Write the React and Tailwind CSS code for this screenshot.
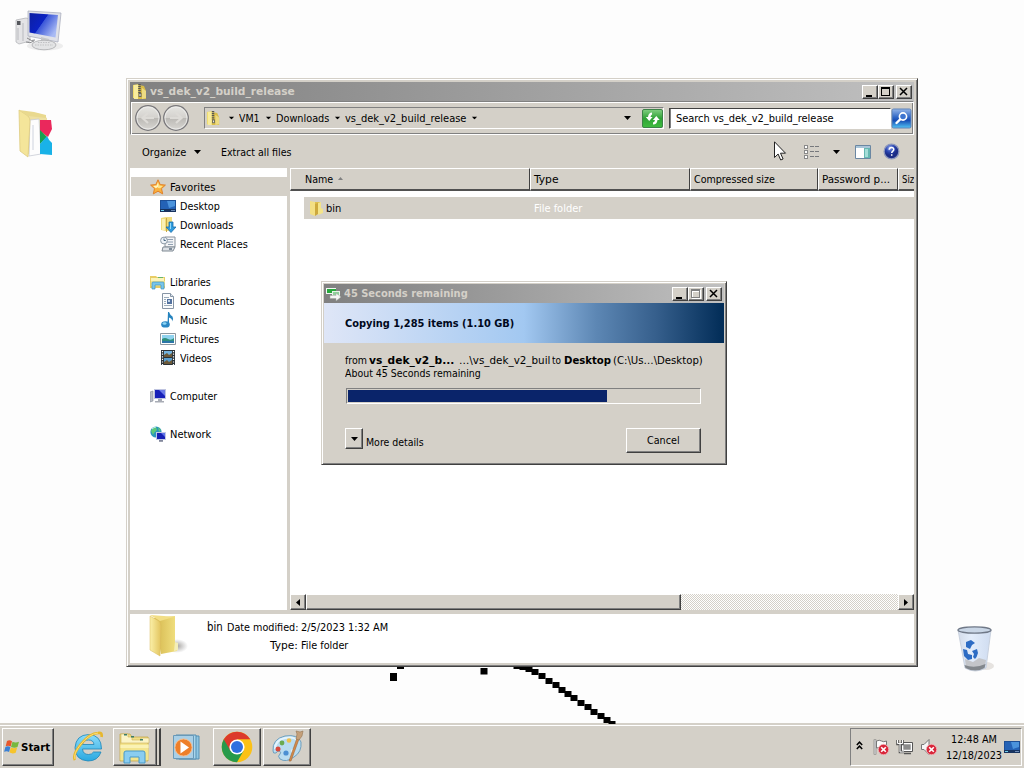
import React, { useLayoutEffect, useRef, useState } from "react";

/* UI label squeezed to a fixed advance width, like the narrow system font */
function T({ w, children, className = "" }) {
  const ref = useRef(null);
  const [k, setK] = useState(1);
  useLayoutEffect(() => {
    if (ref.current) setK(w / ref.current.offsetWidth);
  }, [w, children]);
  return (
    <span className={"block shrink-0 h-[13px] " + className} style={{ width: w }}>
      <span ref={ref} className="inline-block origin-left whitespace-pre leading-[13px]" style={{ transform: `scaleX(${k})` }}>
        {children}
      </span>
    </span>
  );
}

const raised = "bg-[#d4d0c8] border border-t-white border-l-white border-r-[#404040] border-b-[#404040] shadow-[inset_-1px_-1px_0_#808080]";
const frame = "bg-[#d4d0c8] border border-t-[#d4d0c8] border-l-[#d4d0c8] border-r-[#404040] border-b-[#404040] shadow-[inset_1px_1px_0_#fff,inset_-1px_-1px_0_#808080]";

function Down({ className = "" }) {
  return (
    <svg className={"block shrink-0 " + className} width="7" height="4" viewBox="0 0 7 4">
      <path d="M0 0h7L3.5 4z" fill="#000" />
    </svg>
  );
}

function CaptionButton({ kind, className = "" }) {
  return (
    <div className={"w-4 h-[14px] shrink-0 " + raised + " " + className}>
      <svg className="block" width="14" height="12" viewBox="0 0 14 12" shapeRendering="crispEdges">
        {kind === "min" && <path d="M3 9h6v2H3z" fill="#000" />}
        {kind === "max" && <path d="M2 1h9v9H2zM3 3v6h7V3z" fillRule="evenodd" fill="#000" />}
        {kind === "maxoff" && (
          <g>
            <path d="M3 2h9v9H3zM4 4v6h7V4z" fillRule="evenodd" fill="#fff" />
            <path d="M2 1h9v9H2zM3 3v6h7V3z" fillRule="evenodd" fill="#808080" />
          </g>
        )}
        {kind === "close" && <path d="M3 2l7 7M10 2l-7 7" stroke="#000" strokeWidth="1.5" shapeRendering="auto" />}
      </svg>
    </div>
  );
}

function ZipFolder({ s = 16 }) {
  return (
    <svg className="block shrink-0" width={s} height={s} viewBox="0 0 16 16">
      <path d="M1 1l6-1v15l-6-1z" fill="#f0dc6c" />
      <path d="M7 1l5 1 2 5v8H6z" fill="#d9bd49" />
      <path d="M2 1h4v14H2z" fill="#f8ec9c" />
      <path d="M10 4l4 3v7l-4 1z" fill="#eddb82" />
      <path d="M7.5 0v9" stroke="#555" strokeWidth="2.6" strokeDasharray="1.2 0.8" />
      <path d="M6.5 9h3v4h-3z" fill="#6c6a5c" />
      <path d="M7.5 10h1v2h-1z" fill="#eee" />
    </svg>
  );
}

function Folder({ s = 16 }) {
  return (
    <svg className="block shrink-0" width={s} height={s} viewBox="0 0 16 16">
      <path d="M2 1l5 1v14l-5-2z" fill="#f3df83" />
      <path d="M7 2h5v12H7z" fill="#dfc04e" />
      <path d="M7 4l3-1v11l-3 2z" fill="#cda93d" />
      <path d="M10 3l3-1v6l2 1v4l-5 2z" fill="#f4e48a" />
    </svg>
  );
}

function BigFolder() {
  return (
    <svg className="block shrink-0" width="42" height="44" viewBox="0 0 42 44">
      <defs>
        <linearGradient id="bf1" x1="0" x2="1"><stop stopColor="#fbf0a8" /><stop offset="1" stopColor="#e2c45e" /></linearGradient>
        <linearGradient id="bf2" x1="0" x2="1"><stop stopColor="#d4b64c" /><stop offset="1" stopColor="#f3e384" /></linearGradient>
        <radialGradient id="bf3"><stop stopColor="#8e8a86" stopOpacity=".8" /><stop offset="1" stopColor="#999" stopOpacity="0" /></radialGradient>
      </defs>
      <ellipse cx="29" cy="32" rx="11" ry="7" fill="url(#bf3)" />
      <path d="M6 4l21-2v27l3 2-1 6-16 3z" fill="url(#bf2)" />
      <path d="M27 28l3 1v7l-4 1z" fill="#f4eeb8" />
      <path d="M2 2l9 5q2 2 2 5l-1 30-10-6z" fill="url(#bf1)" stroke="#d8ba5c" strokeWidth=".5" />
      <path d="M2 1l14 1 10 1-14 4z" fill="#f2de86" />
    </svg>
  );
}

const icons = {
  star: (
    <g>
      <path d="M8 .8l2.2 4.8 5.2.5-3.9 3.5 1.2 5.3L8 12.2l-4.7 2.7 1.2-5.3L.6 6.1l5.2-.5z" fill="#fbb13c" stroke="#e0812a" strokeWidth="1" />
      <path d="M8 3l1.3 3.6 3.6.4-2.7 2.2L8 9z" fill="#fde58a" />
      <path d="M8 3L6.7 6.6 3.1 7l2.7 2.2L8 8z" fill="#fff3c0" />
    </g>
  ),
  desktop: (
    <g>
      <path d="M0 2h16v12H0z" fill="#1d4f96" />
      <path d="M1 3h14v8H1z" fill="#2462b6" />
      <path d="M7 3h8v5L9 10z" fill="#4b93dc" />
      <path d="M0 11h16v3H0z" fill="#17335f" />
      <path d="M1 12h3v1H1z" fill="#6fd0ee" />
      <path d="M11 12h4v1h-4z" fill="#6d8bb6" />
    </g>
  ),
  downloads: (
    <g>
      <path d="M1 1l5-1h6v14H6l-5-1z" fill="#f0dc7e" />
      <path d="M6 1h1v14H6z" fill="#c9a944" />
      <path d="M2 2h3v11H2z" fill="#faf0b4" />
      <path d="M9 5h4v5h3l-5 5.5L6 10h3z" fill="#2f9bdd" stroke="#1a6ca9" strokeWidth=".8" />
      <path d="M10 6h1v6h-1z" fill="#91d9fa" />
    </g>
  ),
  recent: (
    <g>
      <path d="M5 1h10v10H5z" fill="#f2f3f5" stroke="#8a939d" />
      <path d="M7 3.5h6M7 6h6M8 8.500h5" stroke="#8fa0b2" />
      <path d="M3 11h12l-2 4H2z" fill="#dde1e6" stroke="#7f8993" />
      <circle cx="4" cy="4.500" r="3.4" fill="#eef3f8" stroke="#8c99a5" />
      <path d="M4 2.500v2h1.800" stroke="#496882" fill="none" />
      <path d="M9 12h3v2H9z" fill="#7d8b99" />
    </g>
  ),
  libraries: (
    <g>
      <path d="M0 2h6l1 1h8v11H0z" fill="#e8cd66" />
      <path d="M1 4h13v3H1z" fill="#fbf3b9" />
      <path d="M1 7h14v5H1z" fill="#f5e58c" />
      <path d="M8 3h5v1H8z" fill="#67b56b" />
      <path d="M2 15V9q0-1 1-1h10q1 0 1 1v6h-3v-4H5v4z" fill="#79c5ea" stroke="#3e93c4" strokeWidth=".7" />
    </g>
  ),
  documents: (
    <g>
      <path d="M2.500.5h8l3 3v12h-11z" fill="#fbfcfd" stroke="#8795a5" />
      <path d="M10.500.5v3h3" fill="#dce5ee" stroke="#8795a5" />
      <path d="M4 4.500h5M4 6.500h2M4 8.500h2M4 10.500h2M4 12.500h8" stroke="#9cacba" />
      <path d="M7 6h5v5H7z" fill="#53729f" />
      <path d="M8 7h2v2H8z" fill="#c3d6ea" />
    </g>
  ),
  music: (
    <g>
      <path d="M8 0l1 0q1 3 3.500 4.500Q14 7 12 9.500q.5-3-3-4V12H7.500z" fill="#2583be" />
      <ellipse cx="5.500" cy="12.400" rx="4.300" ry="3.200" fill="#2b87c4" />
      <ellipse cx="4.500" cy="11.500" rx="2" ry="1.200" fill="#8ed6f5" />
    </g>
  ),
  pictures: (
    <g>
      <path d="M.5 2.500h15v11H.5z" fill="#fdfdfd" stroke="#8c979f" />
      <path d="M2 4h12v8H2z" fill="#8fd2ee" />
      <path d="M2 8q3-2 6 0t6-1v5H2z" fill="#2f8f7c" />
      <path d="M2 10h12v2H2z" fill="#2a75a8" />
    </g>
  ),
  videos: (
    <g>
      <path d="M1 0h14v15H1z" fill="#2c3338" />
      <path d="M4 1h8v6H4z" fill="#74b3de" />
      <path d="M4 8h8v6H4z" fill="#5a9fd0" />
      <path d="M4 5l3-2 2 2 3-2v4H4zM4 12l3-2 2 2 3-2v4H4z" fill="#6d5a39" />
      <path d="M2.500 1v14M13.500 1v14" stroke="#fff" strokeWidth="1.2" strokeDasharray="1.2 1.400" />
    </g>
  ),
  computer: (
    <g>
      <path d="M0 4l3-1v10l-3 1z" fill="#b9bec6" stroke="#858c98" strokeWidth=".6" />
      <path d="M4 1h12v10H4z" fill="#bfc4e0" />
      <path d="M5 2h10v8H5z" fill="#1720b8" />
      <path d="M9 2h6v6z" fill="#6b7be8" />
      <path d="M8 11h4v2H8zM5 13h9v1.500H5z" fill="#a8acb5" />
    </g>
  ),
  network: (
    <g>
      <circle cx="6" cy="6" r="5.600" fill="#2b95bd" />
      <path d="M1 5q2-4 5-4l1 3-3 3-1 2zM8 1l3 3-2 2z" fill="#5cc879" />
      <path d="M2 3q2-2 4-2" stroke="#c2f0f0" fill="none" />
      <path d="M6 6h10v8H6z" fill="#c2c8e6" />
      <path d="M7 7h8v6H7z" fill="#151fb4" />
      <path d="M11 7h4v4z" fill="#5d71e8" />
      <path d="M9 14h4v1.800H9z" fill="#82889c" />
    </g>
  ),
};

function Icon({ name, className = "" }) {
  return (
    <svg className={"block shrink-0 " + className} width="16" height="16" viewBox="0 0 16 16">{icons[name]}</svg>
  );
}

const tree = [
  ["star", "Favorites", 46, 0, true],
  ["desktop", "Desktop", 40, 1],
  ["downloads", "Downloads", 53, 1],
  ["recent", "Recent Places", 68, 1],
  null,
  ["libraries", "Libraries", 41, 0],
  ["documents", "Documents", 54, 1],
  ["music", "Music", 27, 1],
  ["pictures", "Pictures", 39, 1],
  ["videos", "Videos", 32, 1],
  null,
  ["computer", "Computer", 47, 0],
  null,
  ["network", "Network", 41, 0],
];

function NavButton({ flip }) {
  return (
    <svg className="block shrink-0" width="28" height="28" viewBox="0 0 28 28">
      <defs>
        <linearGradient id="nb" x1="0" y1="0" x2="0" y2="1">
          <stop stopColor="#e6e5e2" /><stop offset=".48" stopColor="#d4d2ce" /><stop offset=".52" stopColor="#bbb9b5" /><stop offset="1" stopColor="#dad8d4" />
        </linearGradient>
      </defs>
      <circle cx="14" cy="14" r="12.300" fill="url(#nb)" stroke="#77767a" strokeWidth="1.200" />
      <circle cx="14" cy="14" r="11" fill="none" stroke="#efefed" strokeWidth=".8" />
      <path d={flip ? "M8 14h11M14 9l5.500 5-5.500 5" : "M20 14H9M14 9l-5.500 5 5.500 5"} fill="none" stroke="#dddbd7" strokeWidth="2.200" />
    </svg>
  );
}

function AddressBar() {
  return (
    <div className="flex h-[34px] shrink-0 items-center w-[784px] border border-[#808080] border-b-white border-r-white shadow-[inset_1px_1px_0_#fff,inset_-1px_-1px_0_#808080]">
      <div className="flex w-[56px] ml-[3px]"><NavButton /><NavButton flip /></div>
      <div className="ml-[14px] flex h-[22px] w-[460px] items-center border border-[#808080] border-b-white border-r-white pl-px">
        <ZipFolder s={15} />
        <Down className="scale-80 ml-[7px] mr-1" />
        <T w={21}>VM1</T>
        <Down className="scale-80 ml-[5px] mr-[4px]" />
        <T w={53}>Downloads</T>
        <Down className="scale-80 ml-[5px] mr-[4px]" />
        <T w={121}>vs_dek_v2_build_release</T>
        <Down className="scale-80 ml-[5px]" />
        <Down className="ml-auto mr-[11px]" />
        <svg className="block shrink-0" width="21" height="19" viewBox="0 0 21 19">
          <defs><linearGradient id="gr" x1="0" y1="0" x2="0" y2="1"><stop stopColor="#82cf82" /><stop offset=".5" stopColor="#2fa236" /><stop offset="1" stopColor="#3fbd3f" /></linearGradient></defs>
          <rect x=".5" y=".5" width="20" height="18" rx="1.500" fill="url(#gr)" stroke="#3d8348" />
          <path d="M10 3.500q-3.500 0-4 4.500H3.800l3.400 4 3.400-4H8.500q.3-2 1.500-2.500zM11 15.500q4 0 4.500-4.500h2.200l-3.400-4-3.400 4h2.100q-.3 2-2 2.500z" fill="#fff" />
        </svg>
      </div>
      <div className="ml-[5px] flex h-[21px] w-[222px] items-center border border-[#404040] border-b-white border-r-white bg-white pl-[6px] shadow-[inset_1px_0_0_#808080]">
        <T w={158} className="mt-px">Search vs_dek_v2_build_release</T>
      </div>
      <svg className="block shrink-0" width="21" height="21" viewBox="0 0 21 21">
        <defs><linearGradient id="sb" x1="0" y1="0" x2="0" y2="1"><stop stopColor="#94b5e8" /><stop offset=".45" stopColor="#2c63c4" /><stop offset=".6" stopColor="#164cb4" /><stop offset="1" stopColor="#52c4f4" /></linearGradient></defs>
        <rect x="1" y="1" width="19" height="19" rx="1.500" fill="url(#sb)" stroke="#5f83b8" />
        <circle cx="12" cy="8.500" r="3.600" fill="#3d74d0" stroke="#fff" strokeWidth="1.600" />
        <path d="M9 11.500L5.500 15" stroke="#fff" strokeWidth="2.400" strokeLinecap="round" />
      </svg>
    </div>
  );
}

function Toolbar() {
  return (
    <div className="flex h-[33px] shrink-0 items-center pl-[12px] pr-[14px]">
      <T w={44} className="mt-[2px]">Organize</T>
      <Down className="ml-[8px]" />
      <T w={71} className="ml-[20px] mt-[2px]">Extract all files</T>
      <svg className="ml-auto block" width="16" height="14" viewBox="0 0 16 14" shapeRendering="crispEdges">
        {[0, 5, 10].map((y) => (
          <g key={y}>
            <path d={`M.5 ${y + 0.5}h3v3h-3z`} fill="#fff" stroke="#8a8a8a" />
            <path d={`M6 ${y + 1.5}h4M11 ${y + 1.5}h4`} stroke="#77797d" />
          </g>
        ))}
      </svg>
      <Down className="ml-[13px] mr-[15px]" />
      <svg className="block" width="16" height="14" viewBox="0 0 16 14">
        <path d="M.5.5h15v13H.5z" fill="#fff" stroke="#6b87a2" />
        <path d="M1 1h14v2H1z" fill="#a9c5d9" />
        <path d="M9 3h6v10H9z" fill="#66b7b2" /><path d="M10 4h3v8h-3z" fill="#a4ded8" />
      </svg>
      <svg className="ml-[12px] block" width="17" height="17" viewBox="0 0 17 17">
        <defs><radialGradient id="hp" cx=".4" cy=".25"><stop stopColor="#8fa5ec" /><stop offset=".6" stopColor="#2944b0" /><stop offset="1" stopColor="#1b2c86" /></radialGradient></defs>
        <circle cx="8.500" cy="8.500" r="7.400" fill="url(#hp)" stroke="#8d98bd" strokeWidth="1.300" />
        <path d="M6.200 6.800q.1-2.300 2.300-2.300t2.300 2c0 1.700-2.100 1.600-2.100 3.600M8.700 11.200v1.600" fill="none" stroke="#fff" strokeWidth="1.500" />
      </svg>
    </div>
  );
}

const headCell = "flex items-center shrink-0 h-full border-t border-l border-white border-r border-r-[#404040] border-b-2 border-b-[#505050]";

function ScrollButton({ d }) {
  return (
    <div className={"flex h-4 w-4 shrink-0 items-center justify-center " + raised}>
      <svg className="block" width="4" height="7" viewBox="0 0 4 7"><path d={d} /></svg>
    </div>
  );
}

function Explorer() {
  return (
    <div className={"absolute left-[126px] top-[78px] h-[589px] w-[792px] overflow-hidden p-[3px] flex flex-col " + frame}>
      <div className="flex h-[19px] shrink-0 items-center bg-linear-to-r from-[#808080] to-[#c0c0c0] pl-[2px] pr-[2px]">
        <ZipFolder />
        <T w={145} className="ml-[2px] font-bold text-[#d4d0c8]">vs_dek_v2_build_release</T>
        <CaptionButton kind="min" className="ml-auto" />
        <CaptionButton kind="max" />
        <CaptionButton kind="close" className="ml-[2px]" />
      </div>
      <AddressBar />
      <Toolbar />
      <div className="flex h-[442px] shrink-0">
        <div className="w-[157px] shrink-0 bg-white pt-[9px]">
          {tree.map((r, i) =>
            r ? (
              <div key={i} className={"flex h-[19px] items-center pt-[2px] " + (r[4] ? "ml-px bg-[#d4d0c8] " : "ml-px ") + (r[3] ? "pl-[29px]" : "pl-[19px]")}>
                <Icon name={r[0]} className="-mt-px" />
                <T w={r[2]} className="ml-[4px]">{r[1]}</T>
              </div>
            ) : (
              <div key={i} className="h-[19px]" />
            )
          )}
        </div>
        <div className="w-[3px] shrink-0" />
        <div className="flex w-[624px] flex-col overflow-hidden bg-white">
          <div className="flex h-[23px] shrink-0 bg-[#d4d0c8]">
            <div className={headCell + " w-[240px] pl-[14px] pt-px"}>
              <T w={28}>Name</T>
              <svg className="ml-[5px] -mt-[3px] block" width="5" height="3" viewBox="0 0 5 3"><path d="M0 3L2.500 0 5 3z" fill="#808080" /></svg>
            </div>
            <div className={headCell + " w-[160px] pl-[3px] pt-px"}><T w={25}>Type</T></div>
            <div className={headCell + " w-[128px] pl-[3px] pt-px"}><T w={81}>Compressed size</T></div>
            <div className={headCell + " w-[80px] pl-[3px] pt-px"}><T w={68}>Password p...</T></div>
            <div className={headCell + " w-[16px] border-r-0 pl-[3px] pt-px"}><T w={12}>Siz</T></div>
          </div>
          <div className="ml-[14px] mt-[6px] flex h-[22px] items-center bg-[#d4d0c8] pl-[4px]">
            <Folder />
            <T w={15} className="ml-[2px]">bin</T>
            <T w={48} className="ml-[193px] text-white">File folder</T>
          </div>
          <div className="mt-auto flex h-4 w-[624px] bg-[repeating-conic-gradient(#fff_0_25%,#d4d0c8_0_50%)] bg-size-[2px_2px]">
            <ScrollButton d="M4 0v7L0 3.500z" />
            <div className={"w-[375px] " + raised} />
            <div className="ml-auto"><ScrollButton d="M0 0v7l4-3.500z" /></div>
          </div>
        </div>
      </div>
      <div className="mt-[4px] flex min-h-0 flex-1 bg-white pl-[18px] w-[784px]">
        <BigFolder />
        <T w={16} className="ml-[17px] mt-[7px] text-[12px]">bin</T>
        <div className="ml-[4px] mt-[7px] flex flex-col items-end gap-[5px]">
          <T w={71}>Date modified:</T>
          <T w={28}>Type:</T>
        </div>
        <div className="ml-[3px] mt-[7px] flex flex-col gap-[5px]">
          <T w={87}>2/5/2023 1:32 AM</T>
          <T w={47}>File folder</T>
        </div>
      </div>
    </div>
  );
}

function CopyDialog() {
  return (
    <div className={"absolute left-[321px] top-[281px] h-[184px] w-[406px] p-[2px] flex flex-col " + frame}>
      <div className="flex h-[19px] shrink-0 items-center bg-linear-to-r from-[#808080] to-[#c0c0c0] pl-[2px] pr-[2px]">
        <svg className="block shrink-0" width="16" height="16" viewBox="0 0 16 16">
          <path d="M0 2h10v6H0z" fill="#f4f8f4" /><path d="M1 3h9v4H1z" fill="#27a83c" />
          <path d="M6 5h8v5H6z" fill="#e6f3e8" /><path d="M7 6h6v3H7z" fill="#8ed09a" />
          <path d="M4 9.500h6v-2.500l5 4-5 4v-2.500H4z" fill="#f5f5f5" stroke="#9aa09a" strokeWidth=".5" />
        </svg>
        <T w={124} className="ml-[2px] font-bold text-[#d4d0c8]">45 Seconds remaining</T>
        <CaptionButton kind="min" className="ml-auto" />
        <CaptionButton kind="maxoff" />
        <CaptionButton kind="close" className="ml-[2px]" />
      </div>
      <div className="flex h-[40px] w-[400px] shrink-0 items-center bg-[linear-gradient(90deg,#dfe6f7_0%,#a2c8f1_50%,#5d87b4_68%,#365f8c_83%,#012c57_100%)] pl-[21px]">
        <T w={169} className="font-bold text-[#00081c]">Copying 1,285 items (1.10 GB)</T>
      </div>
      <div className="flex flex-col pl-[21px] pt-[11px]">
        <div className="flex">
          <T w={22}>from</T>
          <T w={85} className="ml-[2px] font-bold">vs_dek_v2_b...</T>
          <T w={91} className="ml-[5px]">…\vs_dek_v2_buil</T>
          <T w={9} className="ml-[2px]">to</T>
          <T w={47} className="ml-[3px] font-bold">Desktop</T>
          <T w={90} className="ml-[2px]">(C:\Us…\Desktop)</T>
        </div>
        <T w={136}>About 45 Seconds remaining</T>
        <div className="ml-px mt-[8px] h-4 w-[355px] border border-[#808080] border-b-white border-r-white p-px">
          <div className="h-full w-[259px] bg-[#0a246a]" />
        </div>
        <div className="mt-[24px] flex">
          <div className={"flex h-[21px] w-[18px] items-center justify-center " + raised}><Down /></div>
          <T w={58} className="ml-[3px] mt-[8px]">More details</T>
          <div className={"ml-[202px] flex h-[25px] w-[75px] items-center justify-center " + raised}><T w={33}>Cancel</T></div>
        </div>
      </div>
    </div>
  );
}

function ComputerIcon() {
  return (
    <svg className="absolute left-[14px] top-[8px]" width="52" height="46" viewBox="0 0 52 46">
      <defs><linearGradient id="scr" x1="0" y1="0" x2="1" y2=".6"><stop stopColor="#0c1fa0" /><stop offset=".5" stopColor="#0b22c4" /><stop offset=".52" stopColor="#3a56d8" /><stop offset="1" stopColor="#a8baf4" /></linearGradient></defs>
      <ellipse cx="31" cy="38" rx="18" ry="4.500" fill="#ededed" />
      <path d="M2 12l10-2 4 1v22l-11 3-3-2z" fill="#e4e4e6" stroke="#b5b6ba" strokeWidth=".8" />
      <path d="M3 13h3.500v4H3z" fill="#55575c" /><path d="M4 20v12M9 15v18" stroke="#b9babf" />
      <path d="M13 30q5 4 8 2M12 34q4 2 8-1" stroke="#88898c" fill="none" />
      <path d="M14 3l33 2-3 29-30-6z" fill="#dfe1e8" stroke="#acb0bf" strokeWidth=".8" />
      <path d="M15.500 5l28.500 2-2.500 22.500-26-5z" fill="url(#scr)" />
      <path d="M27 29l8 2v5h-8z" fill="#c5c7ca" />
      <ellipse cx="30" cy="37" rx="12" ry="4.800" fill="#e3e4e5" stroke="#a9abad" strokeWidth=".8" />
      <path d="M21 37h18M24 34.500h12" stroke="#c0c1c3" strokeDasharray="1.500 1" />
    </svg>
  );
}

function DocsFolderIcon() {
  return (
    <svg className="absolute left-[16px] top-[108px]" width="40" height="52" viewBox="0 0 40 52">
      <path d="M4 3l20 3 7 4v36H12z" fill="#eee0a2" />
      <path d="M14 12l9-1 2 35-12 2z" fill="#fdfdfd" stroke="#c8ccd4" strokeWidth=".8" />
      <path d="M17 17v25" stroke="#ced3de" />
      <path d="M24 12h11l1 9-4 8-8-6z" fill="#ea285c" />
      <path d="M24 22l7 7-7 7z" fill="#16a052" />
      <path d="M31 28q2 5 5 7v12l-12-1V36z" fill="#19b2e7" />
      <path d="M3 2l9 6q2 2 2 5l-2 36-8-6z" fill="#f4e59a" stroke="#decb82" strokeWidth=".8" />
      <path d="M3 2l15 2 12 3v3l-18-2z" fill="#e9d98e" />
    </svg>
  );
}

function BinIcon() {
  return (
    <svg className="absolute left-[954px] top-[624px]" width="42" height="50" viewBox="0 0 42 50">
      <defs><linearGradient id="rb" x1="0" x2="1"><stop stopColor="#d3dcea" /><stop offset=".4" stopColor="#e3edfb" /><stop offset="1" stopColor="#cfdcf0" /></linearGradient></defs>
      <ellipse cx="32" cy="42" rx="8" ry="4" fill="#e6e3e0" />
      <path d="M4 6h33l-5 38q-11 6-21 0z" fill="url(#rb)" stroke="#c1cad8" strokeWidth=".8" />
      <path d="M11 35l8 3 6-4 7 2-1 7q-9 5-19 1z" fill="#c3c5c9" />
      <path d="M10.500 41q10 4 21-1l-1 4q-9 5-19 0z" fill="#82878c" />
      <ellipse cx="20.500" cy="6" rx="16.500" ry="3.200" fill="#c9d6e6" stroke="#6f7887" strokeWidth="1.300" />
      <path d="M12 18l5-2 4 3-3 2-2 4-4-2zM9 25l4 1 1 4 4 1v4l-4 1-4-4zM18 27l5-2 1 4q-1 4-3 6l-2-2 1-3z" fill="#2d6cc4" />
    </svg>
  );
}

function Scribble() {
  const line = [[517, 666], [523, 667], [529, 669], [535, 672], [542, 676], [549, 681], [556, 685], [562, 690], [568, 694], [574, 698], [581, 703], [588, 707], [594, 712], [601, 716], [607, 720], [612, 724]];
  return (
    <svg className="absolute left-0 top-0" width="1024" height="724" viewBox="0 0 1024 724">
      {line.map(([x, y]) => <path key={x} d={`M${x - 3.5} ${y - 3}h7v6h-7z`} />)}
      <path d="M390 673h7v8h-7zM397 665h7v4h-7zM480.500 668h7v6.500h-7z" />
    </svg>
  );
}

function Badge({ x, y }) {
  return (
    <g transform={`translate(${x} ${y})`}>
      <circle r="5.200" fill="#d8263a" stroke="#f2b6ba" strokeWidth=".8" />
      <path d="M-2.300-2.300l4.600 4.600M2.300-2.300l-4.600 4.600" stroke="#fff" strokeWidth="1.600" />
    </g>
  );
}

function Taskbar() {
  return (
    <div className="relative flex h-[44px] w-full items-start border-t border-[#d4d0c8] bg-[#d4d0c8] pl-[2px] pr-[2px] pt-[3px] shadow-[inset_0_1px_0_#fff]">
      <div className={"flex h-[38px] w-[52px] shrink-0 items-center pl-px " + raised}>
        <svg className="block shrink-0" width="16" height="16" viewBox="0 0 16 15">
          <path d="M3 1.500q2.500-1.500 5 .2L6.700 7q-2.500-1.500-5-.2z" fill="#e7572c" />
          <path d="M8.500 2.200q3 1.500 6.500 0L13.500 7.500q-3 1.500-6.500-.1z" fill="#77b83e" />
          <path d="M1.400 7.400q2.500-1.400 5 .1l-1.300 5q-2.500-1.500-5-.2z" fill="#3b80d4" />
          <path d="M6.800 8q3 1.500 6.400 0l-1.500 5.200q-3 1.500-6.200-.1z" fill="#f6c42c" />
        </svg>
        <T w={29} className="ml-px font-bold">Start</T>
      </div>
      <svg className="ml-[17px] block shrink-0" width="34" height="38" viewBox="0 0 34 38">
        <defs><linearGradient id="ie" x1="0" y1="0" x2="0" y2="1"><stop stopColor="#8adcfa" /><stop offset="1" stopColor="#2aa8e0" /></linearGradient></defs>
        <path d="M30.500 21H11.500q.5 5.500 6 5.500 3.500 0 5-2.500h7.500q-3 9-13 9-13-1-13-13.500Q5 7 17.500 6.500 30.500 7 30.500 21zM11.500 16.500H23q-.5-4.500-5.500-4.500t-6 4.500z" fill="url(#ie)" stroke="#1e85b8" strokeWidth=".8" />
        <path d="M4 32q-3-5 6-16T27 5q4.500-1 3.500 4" fill="none" stroke="#e7b72d" strokeWidth="2.700" />
        <path d="M4 31q-2-5 6-15T27 5" fill="none" stroke="#f9df78" strokeWidth="1" />
      </svg>
      <div className="ml-[8px] flex h-[38px] w-[48px] shrink-0">
        <div className={"flex w-[44px] justify-center " + raised}>
          <svg className="block" width="36" height="36" viewBox="0 0 36 36">
            <path d="M3 5h10l2 3h16v24H3z" fill="#f1df86" stroke="#c5a84b" strokeWidth=".8" />
            <path d="M4 5h7v3h4v3h9V9h8v5H4z" fill="#fbf4c7" stroke="#cdb25b" strokeWidth=".6" />
            <path d="M7 5h3v1.500H7zM14 7h3v1.500h-3zM23 10h3v1.500h-3z" fill="#3b7d68" />
            <path d="M3.500 15h28v16h-28z" fill="#f3e58e" />
            <path d="M3.500 16h28v3h-28z" fill="#faf2b4" />
            <path d="M7 34V24q0-2 2-2h17q2 0 2 2v10h-6v-6h-9v6z" fill="#8acdf0" stroke="#4999c8" />
          </svg>
        </div>
        <div className="w-[4px] border-y border-r-2 border-t-white border-b-[#404040] border-r-[#404040]" />
      </div>
      <svg className="ml-[10px] block shrink-0" width="32" height="38" viewBox="0 0 32 38">
        <path d="M8 8h20v23H8z" fill="#8fc6e2" stroke="#558fb3" /><path d="M5 7h20v24H5z" fill="#a9d6ec" stroke="#558fb3" />
        <path d="M2.500 7.500h20v23h-20z" fill="#a9cfe6" stroke="#6899b8" />
        <circle cx="12.500" cy="19.500" r="8.600" fill="#ee7f29" stroke="#f7bd8e" />
        <path d="M9.500 13.500l8.500 6-8.500 6z" fill="#fff" />
      </svg>
      <div className={"ml-[10px] flex h-[38px] w-[48px] shrink-0 items-center justify-center " + raised}>
        <svg className="block" width="32" height="32" viewBox="0 0 32 32">
          <circle cx="16" cy="16" r="15.300" fill="#fbc116" />
          <path d="M16 16L2.750 8.350A15.300 15.300 0 0 1 29.250 8.350H16z" fill="#dc3a2c" />
          <path d="M16 16L2.750 8.350A15.300 15.300 0 0 0 16 31.300L22.600 19.800z" fill="#279a4b" />
          <path d="M2.750 8.350L9.400 19.800 16 8.350z" fill="#dc3a2c" />
          <circle cx="16" cy="16" r="7.600" fill="#fff" /><circle cx="16" cy="16" r="6" fill="#2f6fe0" />
        </svg>
      </div>
      <div className={"ml-[2px] flex h-[38px] w-[48px] shrink-0 items-center justify-center " + raised}>
        <svg className="block" width="36" height="36" viewBox="0 0 36 36">
          <path d="M4 22Q3 10 16 7q13-2 16 6 1 10-7 15-8 6-14 2-3-3 0-5 2-2-1-3-2 0-3 2-3 1-3-2z" fill="#b9dcf0" stroke="#6e9fbe" />
          <path d="M6 20Q6 11 16 9q9-2 13 3" fill="none" stroke="#e4f4fd" strokeWidth="2" />
          <circle cx="9" cy="20" r="2.500" fill="#d8483b" /><circle cx="13" cy="14" r="2.400" fill="#6aaa50" /><circle cx="20" cy="11.500" r="2.300" fill="#efc14c" />
          <circle cx="17" cy="24" r="2.600" fill="#4b8fd2" /><circle cx="24" cy="22" r="2" fill="#eef6fa" />
          <path d="M20 32L28 9l2 1-8 22z" fill="#d58b49" stroke="#9c6539" strokeWidth=".6" />
          <path d="M27 10l1-5-1-3 4 1 3-1-1 5-3 4z" fill="#c5a07a" stroke="#957553" strokeWidth=".6" />
        </svg>
      </div>
      <div className="ml-auto flex h-[38px] w-[172px] shrink-0 items-center border border-[#808080] border-b-white border-r-white pl-[5px]">
        <svg className="block shrink-0 -mt-[3px]" width="7" height="9" viewBox="0 0 7 9"><path d="M.8 4L3.500 1.200 6.200 4M.8 8l2.700-2.800L6.200 8" fill="none" stroke="#000" strokeWidth="1.500" /></svg>
        <svg className="ml-[9px] block shrink-0" width="18" height="18" viewBox="0 0 18 18">
          <path d="M3 1.500v15" stroke="#777" strokeWidth="2.600" /><path d="M3 2v14" stroke="#fff" strokeWidth="1" />
          <path d="M4.500 3q3-1.500 5 0t5 0v7q-3 1-5 0t-5 0z" fill="#fafafa" stroke="#777" />
          <Badge x={11.500} y={11.500} />
        </svg>
        <svg className="ml-[6px] block shrink-0" width="18" height="18" viewBox="0 0 18 18">
          <path d="M6.500 5.500h9v7h-9z" fill="#8b8b8b" stroke="#fff" strokeWidth="1.600" /><path d="M5.500 4.500h11v9h-11z" fill="none" stroke="#555" />
          <path d="M8 15.500h7" stroke="#555" strokeWidth="1.500" />
          <path d="M1.500 2v4h5V2M4 6v8h4" stroke="#555" strokeWidth="2.600" fill="none" /><path d="M1.500 2v3.500h5V2M4 6v8h4" stroke="#fff" fill="none" />
        </svg>
        <svg className="ml-[6px] block shrink-0" width="18" height="18" viewBox="0 0 18 18">
          <path d="M1.500 6.500H4l5-5v15l-5-5H1.500z" fill="#f5f5f5" stroke="#777" />
          <Badge x={11.500} y={11.500} />
        </svg>
        <div className="ml-[7px] flex w-[57px] shrink-0 flex-col items-center gap-[3px]">
          <T w={46}>12:48 AM</T>
          <T w={56}>12/18/2023</T>
        </div>
        <Icon name="desktop" className="ml-[2px]" />
      </div>
    </div>
  );
}

export default function App() {
  return (
    <div className="relative flex h-[768px] w-[1024px] flex-col overflow-hidden bg-[#fdfdfd] text-[11px] leading-[13px] text-black font-['DejaVu_Sans_Condensed','DejaVu_Sans',sans-serif] [font-stretch:condensed]">
      <div className="relative min-h-0 flex-1 border-b border-[#d4d0c8]">
        <Scribble />
        <ComputerIcon />
        <DocsFolderIcon />
        <BinIcon />
        <Explorer />
        <CopyDialog />
        <svg className="absolute left-[774px] top-[141px]" width="13" height="20" viewBox="0 0 13 20">
          <path d="M.5.8v15.700l3.600-3.500 2.600 6 2.400-1-2.600-5.800h5z" fill="#fff" stroke="#222" />
        </svg>
      </div>
      <Taskbar />
    </div>
  );
}
